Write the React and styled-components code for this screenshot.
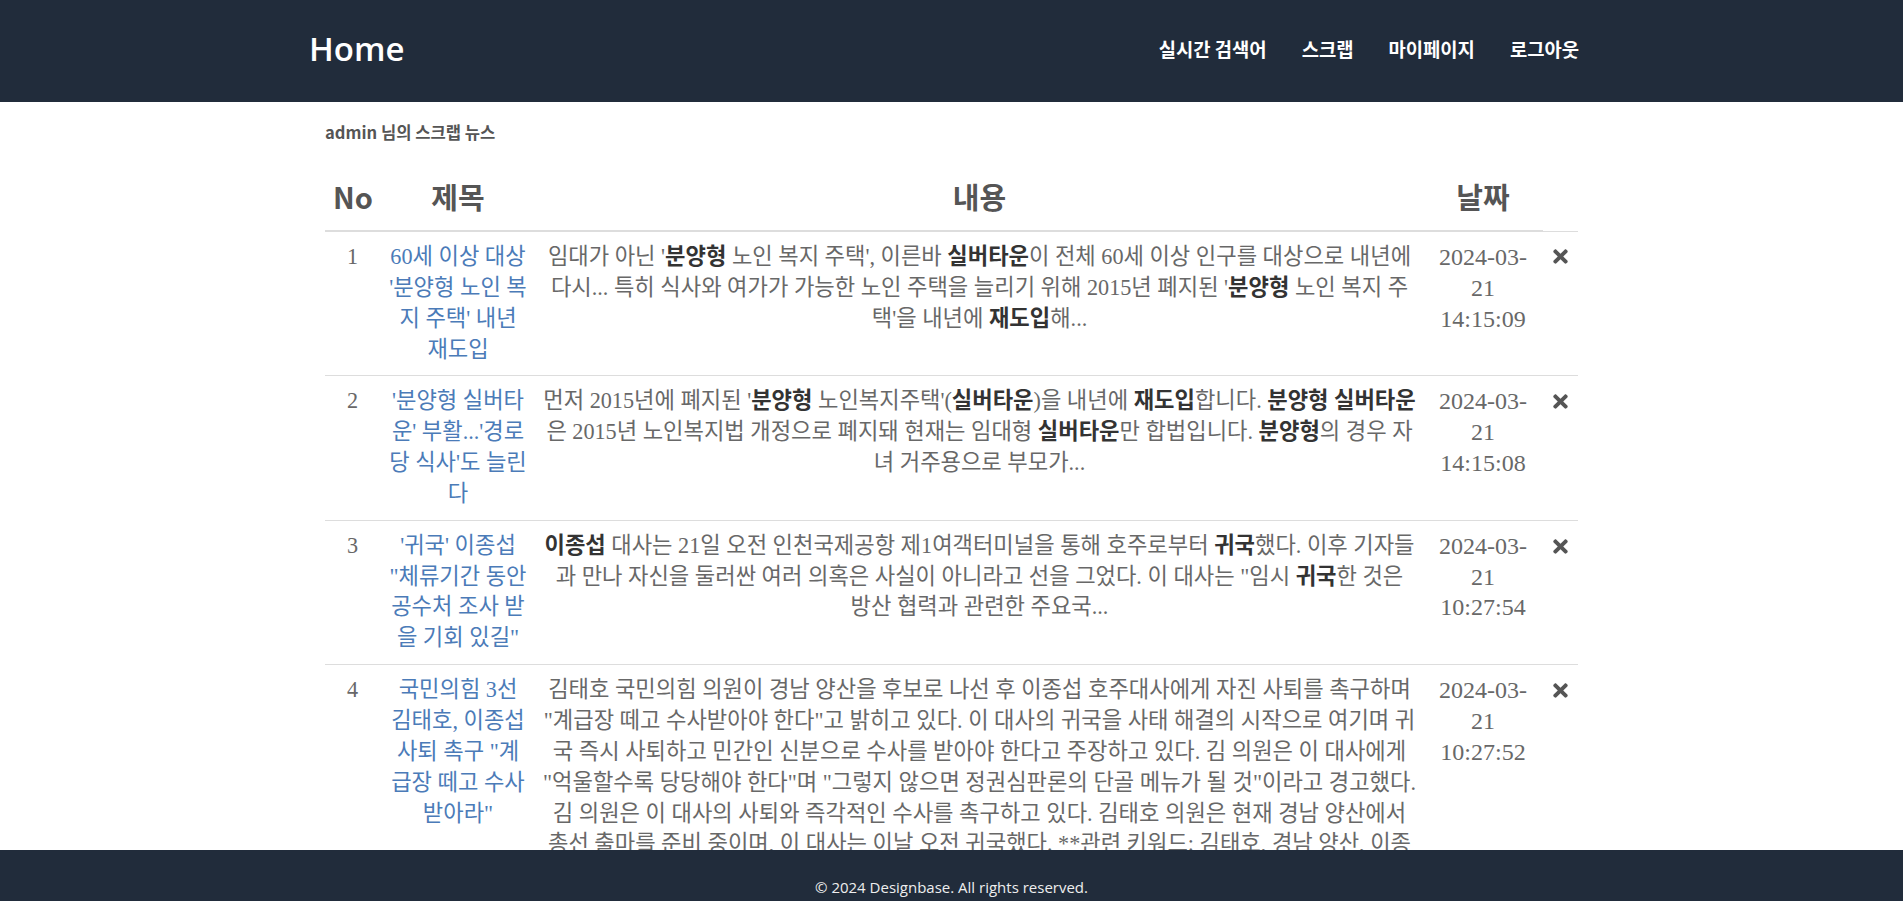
import styled, { createGlobalStyle } from 'styled-components';
import { FaTimes } from 'react-icons/fa';

const GlobalStyle = createGlobalStyle`
    html {
        scrollbar-width: none;
    }
    html::-webkit-scrollbar {
        display: none;
    }
    body {
        margin: 0;
        background: #ffffff;
        font-family: "Liberation Serif", "Noto Sans CJK KR", serif;
    }
    * {
        box-sizing: border-box;
    }
`

const Header = styled.header`
    height: 102px;
    background: #212c3b;
`
const Inner = styled.div`
    width: 1285px;
    margin: 0 auto;
    padding-right: 15px;
`
const HeaderInner = styled(Inner)`
    height: 100%;
    display: flex;
    align-items: center;
    justify-content: space-between;
    padding-bottom: 6px;
`
const Logo = styled.a`
    font-family: "Open Sans", sans-serif;
    font-weight: 600;
    font-size: 33px;
    color: #ffffff;
    text-decoration: none;
`
const Nav = styled.nav`
    display: flex;
    gap: 35px;
`
const NavLink = styled.a`
    font-family: "Noto Sans CJK KR", sans-serif;
    font-weight: 700;
    font-size: 18.8px;
    color: #ffffff;
    text-decoration: none;
`

const Main = styled(Inner)`
    padding-top: 18px;
    padding-left: 16px;
    padding-bottom: 80px;
`
const PageTitle = styled.h2`
    margin: 0;
    font-family: "Noto Sans CJK KR", sans-serif;
    font-size: 16.6px;
    line-height: 24px;
    font-weight: 700;
    color: #555555;
`
const Table = styled.table`
    width: 1253px;
    margin-top: 18px;
    border-collapse: collapse;
    table-layout: fixed;
`
const Th = styled.th`
    padding: 14px 8px;
    font-family: "Noto Sans CJK KR", sans-serif;
    font-size: 29px;
    line-height: 40px;
    font-weight: 700;
    color: #555555;
    text-align: center;
    border-bottom: 2px solid #dddddd;
`
const Td = styled.td`
    padding: 10px ${props => props.$px ?? 8}px;
    font-size: ${props => props.$size || 22.2}px;
    line-height: 30.85px;
    color: #686868;
    text-align: center;
    vertical-align: top;
    border-top: 1px solid #dddddd;
`
const TitleLink = styled.a`
    color: #4b7bb8;
    text-decoration: none;
`
const Line = styled.span`
    display: block;
    white-space: nowrap;
`
const Mark = styled.b`
    font-weight: 700;
    color: #333333;
`
const DeleteButton = styled.button`
    width: 100%;
    height: 30.85px;
    padding: 0;
    display: flex;
    align-items: center;
    justify-content: center;
    border: none;
    background: none;
    color: #555555;
    cursor: pointer;
`

const Footer = styled.footer`
    position: fixed;
    left: 0;
    right: 0;
    bottom: 0;
    height: 51px;
    padding-top: 27px;
    background: #212c3b;
    font-family: "Open Sans", sans-serif;
    font-size: 15px;
    line-height: 20px;
    color: #eeeeee;
    text-align: center;
`

const news = [
    {
        no: 1,
        title: "60세 이상 대상 '분양형 노인 복지 주택' 내년 재도입",
        content: [
            <>임대가 아닌 '<Mark>분양형</Mark> 노인 복지 주택', 이른바 <Mark>실버타운</Mark>이 전체 60세 이상 인구를 대상으로 내년에</>,
            <>다시... 특히 식사와 여가가 가능한 노인 주택을 늘리기 위해 2015년 폐지된 '<Mark>분양형</Mark> 노인 복지 주</>,
            <>택'을 내년에 <Mark>재도입</Mark>해...</>,
        ],
        date: '2024-03-21 14:15:09',
    },
    {
        no: 2,
        title: "'분양형 실버타운' 부활...'경로당 식사'도 늘린다",
        content: [
            <>먼저 2015년에 폐지된 '<Mark>분양형</Mark> 노인복지주택'(<Mark>실버타운</Mark>)을 내년에 <Mark>재도입</Mark>합니다. <Mark>분양형</Mark> <Mark>실버타운</Mark></>,
            <>은 2015년 노인복지법 개정으로 폐지돼 현재는 임대형 <Mark>실버타운</Mark>만 합법입니다. <Mark>분양형</Mark>의 경우 자</>,
            <>녀 거주용으로 부모가...</>,
        ],
        date: '2024-03-21 14:15:08',
    },
    {
        no: 3,
        title: "'귀국' 이종섭 \"체류기간 동안 공수처 조사 받을 기회 있길\"",
        content: [
            <><Mark>이종섭</Mark> 대사는 21일 오전 인천국제공항 제1여객터미널을 통해 호주로부터 <Mark>귀국</Mark>했다. 이후 기자들</>,
            <>과 만나 자신을 둘러싼 여러 의혹은 사실이 아니라고 선을 그었다. 이 대사는 "임시 <Mark>귀국</Mark>한 것은</>,
            <>방산 협력과 관련한 주요국...</>,
        ],
        date: '2024-03-21 10:27:54',
    },
    {
        no: 4,
        title: '국민의힘 3선 김태호, 이종섭 사퇴 촉구 "계급장 떼고 수사받아라"',
        content: [
            <>김태호 국민의힘 의원이 경남 양산을 후보로 나선 후 이종섭 호주대사에게 자진 사퇴를 촉구하며</>,
            <>"계급장 떼고 수사받아야 한다"고 밝히고 있다. 이 대사의 귀국을 사태 해결의 시작으로 여기며 귀</>,
            <>국 즉시 사퇴하고 민간인 신분으로 수사를 받아야 한다고 주장하고 있다. 김 의원은 이 대사에게</>,
            <>"억울할수록 당당해야 한다"며 "그렇지 않으면 정권심판론의 단골 메뉴가 될 것"이라고 경고했다.</>,
            <>김 의원은 이 대사의 사퇴와 즉각적인 수사를 촉구하고 있다. 김태호 의원은 현재 경남 양산에서</>,
            <>총선 출마를 준비 중이며, 이 대사는 이날 오전 귀국했다. **관련 키워드: 김태호, 경남 양산, 이종</>,
            <>섭, 호주대사, 사퇴, 수사**</>,
        ],
        date: '2024-03-21 10:27:52',
    },
]

const App = () => {
    return(
        <>
        <GlobalStyle />
        <Header>
            <HeaderInner>
                <Logo href="#">Home</Logo>
                <Nav>
                    <NavLink href="#">실시간 검색어</NavLink>
                    <NavLink href="#">스크랩</NavLink>
                    <NavLink href="#">마이페이지</NavLink>
                    <NavLink href="#">로그아웃</NavLink>
                </Nav>
            </HeaderInner>
        </Header>
        <Main>
            <PageTitle>admin 님의 스크랩 뉴스</PageTitle>
            <Table>
                <colgroup>
                    <col style={{ width: 55 }} />
                    <col style={{ width: 156 }} />
                    <col style={{ width: 887 }} />
                    <col style={{ width: 120 }} />
                    <col style={{ width: 35 }} />
                </colgroup>
                <thead>
                    <tr>
                        <Th>No</Th>
                        <Th>제목</Th>
                        <Th>내용</Th>
                        <Th>날짜</Th>
                    </tr>
                </thead>
                <tbody>
                    {news.map(item => (
                        <tr key={item.no}>
                            <Td>{item.no}</Td>
                            <Td><TitleLink href="#">{item.title}</TitleLink></Td>
                            <Td $px={0}>
                                {item.content.map((line, i) => <Line key={i}>{line}</Line>)}
                            </Td>
                            <Td $px={13} $size={24}>{item.date}</Td>
                            <Td $px={0}>
                                <DeleteButton aria-label="삭제"><FaTimes size={21} /></DeleteButton>
                            </Td>
                        </tr>
                    ))}
                </tbody>
            </Table>
        </Main>
        <Footer>© 2024 Designbase. All rights reserved.</Footer>
        </>
    )
}

export default App;
